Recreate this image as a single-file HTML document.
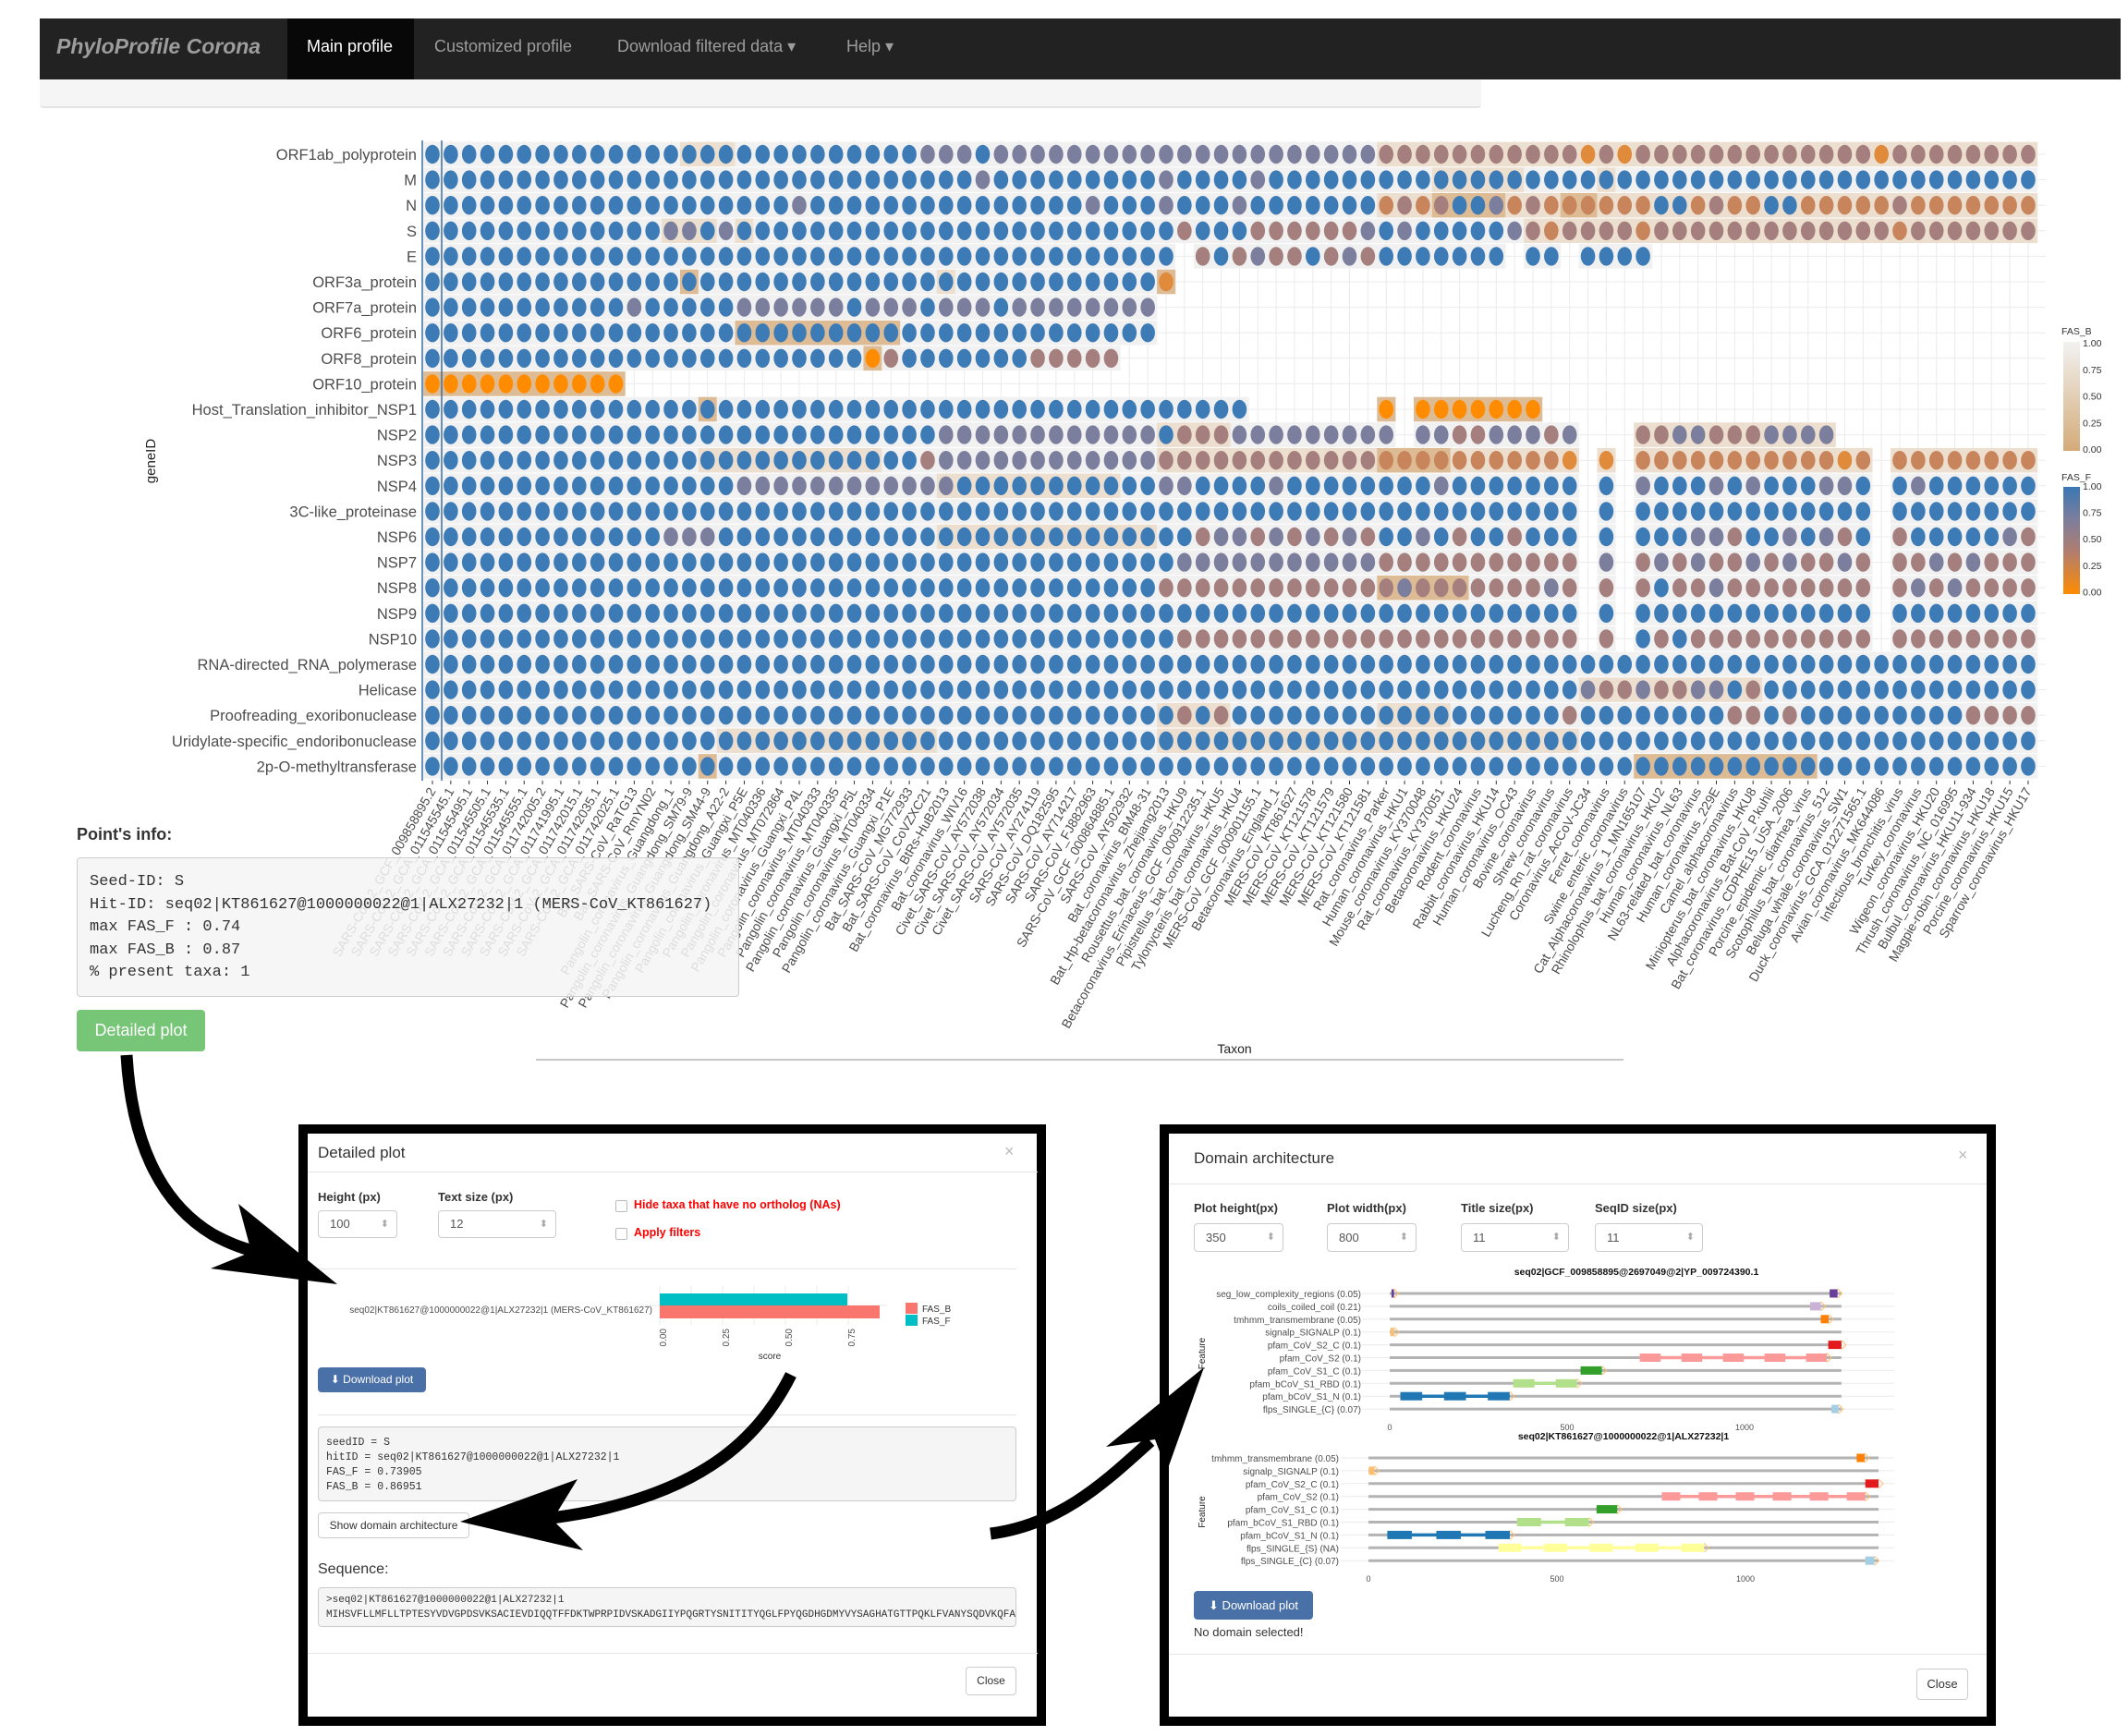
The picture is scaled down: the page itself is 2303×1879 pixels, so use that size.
<!DOCTYPE html>
<html><head><meta charset="utf-8">
<style>
html,body{margin:0;padding:0;}
body{width:2303px;height:1879px;position:relative;overflow:hidden;background:#fff;font-family:"Liberation Sans",sans-serif;color:#333;}
.a{position:absolute;}
.nav{left:43px;top:20px;width:2252px;height:66px;background:#222;}
.nav span{position:absolute;top:20px;font-size:18px;color:#9d9d9d;}
.mono{font-family:"Liberation Mono",monospace;}
.frame{position:absolute;border:10px solid #000;background:#fff;box-sizing:border-box;}
.inp{position:absolute;border:1px solid #ccc;border-radius:4px;background:#fff;box-sizing:border-box;font-size:13px;color:#555;padding-left:12px;}
.inp:after{content:"⬍";position:absolute;right:8px;font-size:11px;color:#aaa;}
.lbl{position:absolute;font-size:13px;font-weight:bold;color:#333;}
.hr{position:absolute;height:1px;background:#e5e5e5;}
.btn{position:absolute;border-radius:4px;box-sizing:border-box;font-size:13px;text-align:center;}
.pre{position:absolute;background:#f5f5f5;border:1px solid #ccc;border-radius:4px;box-sizing:border-box;overflow:hidden;font-family:"Liberation Mono",monospace;color:#333;white-space:pre;}
</style></head><body>

<div class="a nav">
  <span style="left:18px;top:17px;font-size:23px;font-weight:bold;font-style:italic;color:#9d9d9d;">PhyloProfile Corona</span>
  <div class="a" style="left:268px;top:0;width:137px;height:66px;background:#080808;"></div>
  <span style="left:289px;color:#fff;">Main profile</span>
  <span style="left:427px;">Customized profile</span>
  <span style="left:625px;">Download filtered data ▾</span>
  <span style="left:873px;">Help ▾</span>
</div>
<div class="a" style="left:43px;top:86px;width:1560px;height:29px;background:#f5f5f5;border-bottom:2px solid #e3e3e3;border-radius:0 0 4px 4px;"></div>

<svg id="hm" class="a" style="left:0;top:0" width="2303" height="1160"></svg>

<div class="a" style="left:83px;top:893px;font-size:18px;font-weight:bold;color:#333;">Point's info:</div>
<div class="a mono" style="left:83px;top:928px;width:717px;height:151px;background:rgba(245,245,245,0.86);border:1px solid #ccc;border-radius:4px;box-sizing:border-box;"></div>
<div class="a mono" style="left:97px;top:943px;font-size:17px;line-height:24.5px;color:#333;white-space:pre;">Seed-ID: S
Hit-ID: seq02|KT861627@1000000022@1|ALX27232|1 (MERS-CoV_KT861627)
max FAS_F : 0.74
max FAS_B : 0.87
% present taxa: 1</div>
<div class="a" style="left:83px;top:1093px;width:139px;height:45px;background:#77c577;border-radius:4px;color:#fff;font-size:18px;line-height:45px;text-align:center;">Detailed plot</div>
<div class="a" style="left:580px;top:1146px;width:1177px;height:2px;background:#c8c8c8;"></div>

<!-- Left modal -->
<div class="frame" style="left:323px;top:1217px;width:809px;height:651px;"></div>
<div class="a" style="left:344px;top:1238px;font-size:17px;color:#333;">Detailed plot</div>
<div class="a" style="left:1087px;top:1236px;font-size:18px;color:#bbb;">×</div>
<div class="hr" style="left:333px;top:1268px;width:790px;"></div>
<div class="lbl" style="left:344px;top:1288px;">Height (px)</div>
<div class="inp" style="left:344px;top:1310px;width:86px;height:30px;line-height:28px;">100</div>
<div class="lbl" style="left:474px;top:1288px;">Text size (px)</div>
<div class="inp" style="left:474px;top:1310px;width:128px;height:30px;line-height:28px;">12</div>
<div class="a" style="left:666px;top:1299px;width:11px;height:11px;border:1px solid #bbb;border-radius:2px;"></div>
<div class="a" style="left:686px;top:1297px;font-size:12.5px;font-weight:bold;color:#f00;">Hide taxa that have no ortholog (NAs)</div>
<div class="a" style="left:666px;top:1329px;width:11px;height:11px;border:1px solid #bbb;border-radius:2px;"></div>
<div class="a" style="left:686px;top:1327px;font-size:12.5px;font-weight:bold;color:#f00;">Apply filters</div>
<div class="hr" style="left:344px;top:1373px;width:756px;"></div>
<svg class="a" style="left:340px;top:1390px" width="720" height="90">
  <g stroke="#ebebeb"><line x1="374" y1="2" x2="374" y2="44"/><line x1="408" y1="2" x2="408" y2="44"/><line x1="442" y1="2" x2="442" y2="44"/><line x1="476" y1="2" x2="476" y2="44"/><line x1="510" y1="2" x2="510" y2="44"/><line x1="544" y1="2" x2="544" y2="44"/><line x1="578" y1="2" x2="578" y2="44"/><line x1="350" y1="23" x2="620" y2="23"/></g>
  <rect x="374" y="10" width="203" height="13" fill="#00bfc4"/>
  <rect x="374" y="23" width="238" height="14" fill="#f8766d"/>
  <text x="366" y="31" font-size="10" fill="#4d4d4d" text-anchor="end" font-family="Liberation Sans">seq02|KT861627@1000000022@1|ALX27232|1 (MERS-CoV_KT861627)</text>
  <g font-size="10" fill="#4d4d4d" font-family="Liberation Sans" text-anchor="end">
   <text transform="translate(381,48) rotate(-90)">0.00</text>
   <text transform="translate(449,48) rotate(-90)">0.25</text>
   <text transform="translate(517,48) rotate(-90)">0.50</text>
   <text transform="translate(585,48) rotate(-90)">0.75</text>
  </g>
  <text x="493" y="81" font-size="10" fill="#333" text-anchor="middle" font-family="Liberation Sans">score</text>
  <rect x="640" y="20" width="13" height="12" fill="#f8766d"/><rect x="640" y="33" width="13" height="12" fill="#00bfc4"/>
  <text x="658" y="30" font-size="10" fill="#333" font-family="Liberation Sans">FAS_B</text>
  <text x="658" y="43" font-size="10" fill="#333" font-family="Liberation Sans">FAS_F</text>
</svg>
<div class="btn" style="left:344px;top:1480px;width:117px;height:27px;background:#4a70a8;color:#fff;line-height:27px;font-size:12px;">⬇ Download plot</div>
<div class="hr" style="left:344px;top:1531px;width:756px;"></div>
<div class="pre" style="left:344px;top:1544px;width:756px;height:81px;font-size:11.5px;line-height:16px;padding:9px 0 0 8px;">seedID = S
hitID = seq02|KT861627@1000000022@1|ALX27232|1
FAS_F = 0.73905
FAS_B = 0.86951</div>
<div class="btn" style="left:344px;top:1637px;width:164px;height:28px;border:1px solid #ccc;background:#fff;color:#333;line-height:26px;font-size:12px;">Show domain architecture</div>
<div class="a" style="left:344px;top:1690px;font-size:16px;color:#333;">Sequence:</div>
<div class="pre" style="left:344px;top:1718px;width:756px;height:43px;font-size:11px;line-height:16px;padding:5px 0 0 8px;">&gt;seq02|KT861627@1000000022@1|ALX27232|1
MIHSVFLLMFLLTPTESYVDVGPDSVKSACIEVDIQQTFFDKTWPRPIDVSKADGIIYPQGRTYSNITITYQGLFPYQGDHGDMYVYSAGHATGTTPQKLFVANYSQDVKQFANGFVVRIGAAANSTGTVIISPSTSATIRKIYPAFMLGSSVGNFSDGKMGRFFNHTLVLLPDGCGTLLRAFYCILEPRSGNHCPAGNSYTSFATYHTPATDCSDGNYNRNASLNSFKEYFNLRNCTFMYTYNITEDEILEWFGITQTAQGVHLFSSRYVDLYGGNMFQFATLPVYDTIKYYSIIPHSIRSIQSDRKAWAAFYVYKLQPLTFLLDFSVDGYIRRAIDCGFNDLSQLHCSYESFDVESGVYSVSSFEAKPSGSVVEQAEGVECDFSPLLSGTPPQVYNFKRLVFTNCNYNLTKLLSLFSVNDFTCSQISPAAIASNCYSSLILDYFSYPLSMKSDLSVSSAGPISQFNYKQSFSNPTCLILATVPHNLTTITKPLKYSYINKCSRLLSDDRTEVPQLVNANQYSPCVSIVPSTVWEDGDYYRKQLSPLEGGGWLVASGSTVAMTEQLQMGFGITVQYGTDTNSVCPKLEFANDTKIASQLGNCVEYSLYGVSGRGVFQNCTAVGVRQQRFVYDAYQNLVGYYSDDGNYYCLRACVSVPVSVIYDKETKTHATLFGSVACEHISSTMSQYSRSTRSMLKRRDSTYGPLQTPVGCVLGLVNSSLFVEDCKLPLGQSLCALPDTPSTLTPRSVRSVPGEMRLASIAFNHPIQVDQLNSSYFKLSIPTNFSFGVTQEYIQTTIQKVTVDCKQYVCNGFQKCEQLLREYGQFCSKINQALHGANLRQDDSVRNLFASVKSSQSSPIIPGFGGDFNLTLLEPVSISTGSRSARSAIEDLLFDKVTIADPGYMQGYDDCMQQGPASARDLICAQYVAGYKVLPPLMDVNMEAAYTSSLLGSIAGVGWTAGLSSFAAIPFAQSIFYRLNGVGITQQVLSENQKLIANKFNQALGAMQTGFTTTNEAFHKVQDAVNNNAQALSKLASELSNTFGAISASIGDIIQRLDVLEQDAQIDRLINGRLTTLNAFVAQQLVRSESAALSAQLAKDKVNECVKAQSKRSGFCGQGTHIVSFVVNAPNGLYFMHVGYYPSNHIEVVSAYGLCDAANPTNCIAPVNGYFIKTNNTRIVDEWSYTGSSFYAPEPITSLNTKYVAPQVTYQNISTNLPPPLLGNSTGIDFQDELDEFFKNVSTSIPNFGSLTQINTTLLDLTYEMLSLQQVVKALNESYIDLKELGNYTYYNKWPWYIWLGFIAGLVALALCVFFILCCTGCGTNCMGKLKCNRCCDRYEEYDLEPHKVHVH</div>
<div class="hr" style="left:333px;top:1789px;width:790px;"></div>
<div class="btn" style="left:1045px;top:1804px;width:55px;height:31px;border:1px solid #ccc;background:#fff;color:#333;line-height:29px;font-size:12px;">Close</div>

<!-- Right modal -->
<div class="frame" style="left:1255px;top:1217px;width:905px;height:651px;"></div>
<div class="a" style="left:1292px;top:1244px;font-size:17px;color:#333;">Domain architecture</div>
<div class="a" style="left:2119px;top:1240px;font-size:18px;color:#bbb;">×</div>
<div class="hr" style="left:1265px;top:1281px;width:885px;"></div>
<div class="lbl" style="left:1292px;top:1300px;">Plot height(px)</div>
<div class="lbl" style="left:1436px;top:1300px;">Plot width(px)</div>
<div class="lbl" style="left:1581px;top:1300px;">Title size(px)</div>
<div class="lbl" style="left:1726px;top:1300px;">SeqID size(px)</div>
<div class="inp" style="left:1292px;top:1324px;width:97px;height:31px;line-height:29px;">350</div>
<div class="inp" style="left:1436px;top:1324px;width:97px;height:31px;line-height:29px;">800</div>
<div class="inp" style="left:1581px;top:1324px;width:117px;height:31px;line-height:29px;">11</div>
<div class="inp" style="left:1726px;top:1324px;width:117px;height:31px;line-height:29px;">11</div>
<svg id="dom" class="a" style="left:1265px;top:1360px" width="885" height="360"></svg>
<div class="btn" style="left:1292px;top:1722px;width:129px;height:31px;background:#4a70a8;color:#fff;line-height:31px;font-size:13px;">⬇ Download plot</div>
<div class="a" style="left:1292px;top:1759px;font-size:13px;color:#333;">No domain selected!</div>
<div class="hr" style="left:1265px;top:1790px;width:885px;"></div>
<div class="btn" style="left:2074px;top:1806px;width:56px;height:34px;border:1px solid #ccc;background:#fff;color:#333;line-height:32px;font-size:13px;">Close</div>

<!-- arrows -->
<svg class="a" style="left:0;top:0" width="2303" height="1879">
  <g fill="none" stroke="#000" stroke-width="13">
    <path d="M137,1142 C142,1230 170,1300 230,1336 C250,1347 265,1352 285,1357"/>
    <path d="M856,1488 C820,1560 760,1610 640,1636 C620,1640 605,1642 590,1644"/>
    <path d="M1072,1660 C1150,1650 1200,1600 1245,1560"/>
  </g>
  <polygon points="258,1303 365,1390 228,1373 272,1355" fill="#000"/>
  <polygon points="625,1601 498,1647 631,1678 598,1645" fill="#000"/>
  <polygon points="1197,1566 1303,1480 1263,1592 1250,1558" fill="#000"/>
</svg>

<script>
(function(){
var NS="http://www.w3.org/2000/svg";
function el(p,n,a,t){var e=document.createElementNS(NS,n);for(var k in a)e.setAttribute(k,a[k]);if(t!=null)e.textContent=t;p.appendChild(e);return e;}
var svg=document.getElementById("hm");
var N=88,x0=468,dx=19.85,y0=167,dy=27.6;
var genes=["ORF1ab_polyprotein","M","N","S","E","ORF3a_protein","ORF7a_protein","ORF6_protein","ORF8_protein","ORF10_protein","Host_Translation_inhibitor_NSP1","NSP2","NSP3","NSP4","3C-like_proteinase","NSP6","NSP7","NSP8","NSP9","NSP10","RNA-directed_RNA_polymerase","Helicase","Proofreading_exoribonuclease","Uridylate-specific_endoribonuclease","2p-O-methyltransferase"];
var taxa=["SARS-CoV-2_GCF_009858895.2","SARS-CoV-2_GCA_011545545.1","SARS-CoV-2_GCA_011545495.1","SARS-CoV-2_GCA_011545505.1","SARS-CoV-2_GCA_011545535.1","SARS-CoV-2_GCA_011545555.1","SARS-CoV-2_GCA_011742005.2","SARS-CoV-2_GCA_011741995.1","SARS-CoV-2_GCA_011742015.1","SARS-CoV-2_GCA_011742035.1","SARS-CoV-2_GCA_011742025.1","Bat_SARS-CoV_RaTG13","Bat_SARS-CoV_RmYN02","Pangolin_coronavirus_Guangdong_1","Pangolin_coronavirus_Guangdong_SM79-9","Pangolin_coronavirus_Guangdong_SM44-9","Pangolin_coronavirus_Guangdong_A22-2","Pangolin_coronavirus_Guangxi_P5E","Pangolin_coronavirus_MT040336","Pangolin_coronavirus_MT072864","Pangolin_coronavirus_Guangxi_P4L","Pangolin_coronavirus_MT040333","Pangolin_coronavirus_MT040335","Pangolin_coronavirus_Guangxi_P5L","Pangolin_coronavirus_MT040334","Pangolin_coronavirus_Guangxi_P1E","Bat_SARS-CoV_MG772933","Bat_SARS-CoV_CoVZXC21","Bat_coronavirus_BtRs-HuB2013","Bat_coronavirus_WIV16","Civet_SARS-CoV_AY572038","Civet_SARS-CoV_AY572034","Civet_SARS-CoV_AY572035","SARS-CoV_AY274119","SARS-CoV_DQ182595","SARS-CoV_AY714217","SARS-CoV_FJ882963","SARS-CoV_GCF_000864885.1","SARS-CoV_AY502932","Bat_coronavirus_BM48-31","Bat_Hp-betacoronavirus_Zhejiang2013","Rousettus_bat_coronavirus_HKU9","Betacoronavirus_Erinaceus_GCF_000912235.1","Pipistrellus_bat_coronavirus_HKU5","Tylonycteris_bat_coronavirus_HKU4","MERS-CoV_GCF_000901155.1","Betacoronavirus_England_1","MERS-CoV_KT861627","MERS-CoV_KT121578","MERS-CoV_KT121579","MERS-CoV_KT121580","MERS-CoV_KT121581","Rat_coronavirus_Parker","Human_coronavirus_HKU1","Mouse_coronavirus_KY370048","Rat_coronavirus_KY370051","Betacoronavirus_HKU24","Rodent_coronavirus","Rabbit_coronavirus_HKU14","Human_coronavirus_OC43","Bovine_coronavirus","Shrew_coronavirus","Lucheng_Rn_rat_coronavirus","Coronavirus_AcCoV-JC34","Ferret_coronavirus","Swine_enteric_coronavirus","Cat_Alphacoronavirus_1_MN165107","Rhinolophus_bat_coronavirus_HKU2","Human_coronavirus_NL63","NL63-related_bat_coronavirus","Human_coronavirus_229E","Camel_alphacoronavirus","Miniopterus_bat_coronavirus_HKU8","Alphacoronavirus_Bat-CoV_P.kuhlii","Bat_coronavirus_CDPHE15_USA_2006","Porcine_epidemic_diarrhea_virus","Scotophilus_bat_coronavirus_512","Beluga_whale_coronavirus_SW1","Duck_coronavirus_GCA_012271565.1","Avian_coronavirus_MK644086","Infectious_bronchitis_virus","Turkey_coronavirus","Wigeon_coronavirus_HKU20","Thrush_coronavirus_NC_016995","Bulbul_coronavirus_HKU11-934","Magpie-robin_coronavirus_HKU18","Porcine_coronavirus_HKU15","Sparrow_coronavirus_HKU17"];
var C={b:"#3d7bb6",p:"#7b7e9d",r:"#a57f7d",o:"#c8845b",O:"#ff8c00",q:"#e08a3c"};
var BG={g:"#f1f1f1",l:"#eddfcf",t:"#dcbb95"};
function mk(specs){var a=[];for(var i=0;i<N;i++)a.push(".");specs.forEach(function(s){for(var i=s[0];i<=s[1];i++)a[i]=s[2].length>1?s[2][(i-s[0])%s[2].length]:s[2];});return a;}
var gap=[[63,63,"."],[65,65,"."],[79,79,"."]];
function G(specs){return mk(specs.concat(gap));}
var rows=[
 mk([[0,26,"b"],[27,51,"p"],[30,30,"b"],[52,87,"r"],[63,63,"q"],[65,65,"q"],[79,79,"q"]]),
 mk([[0,87,"b"],[30,30,"p"],[40,40,"p"],[45,45,"p"]]),
 mk([[0,51,"b"],[20,20,"p"],[36,36,"p"],[40,40,"p"],[44,44,"p"],[52,87,"o"],[53,53,"r"],[55,55,"r"],[60,60,"r"],[70,70,"r"],[80,80,"r"],[56,57,"b"],[58,58,"p"],[67,68,"b"],[73,74,"b"]]),
 mk([[0,38,"b"],[13,14,"p"],[16,16,"p"],[39,50,"bbrbbbrrrrrr"],[51,51,"p"],[52,59,"bpbbbbbp"],[60,87,"r"],[61,61,"o"],[66,66,"o"],[80,80,"o"]]),
 mk([[0,40,"b"],[42,51,"rbrpr"],[52,58,"b"],[60,61,"b"],[63,66,"b"]]),
 mk([[0,39,"b"],[40,40,"q"]]),
 mk([[0,10,"b"],[11,11,"p"],[12,16,"b"],[17,39,"p"],[23,23,"b"],[27,27,"b"],[31,31,"b"]]),
 mk([[0,39,"b"]]),
 mk([[0,23,"b"],[24,24,"O"],[25,25,"r"],[26,32,"b"],[33,37,"r"]]),
 mk([[0,10,"O"]]),
 mk([[0,44,"b"],[52,52,"O"],[54,60,"O"]]),
 mk([[0,27,"b"],[28,39,"p"],[40,40,"b"],[41,43,"r"],[44,52,"p"],[54,62,"pprrppprp"],[66,76,"rrpprrrpppp"]]),
 G([[0,26,"b"],[27,27,"r"],[28,39,"p"],[40,51,"r"],[52,62,"o"],[62,62,"q"],[64,64,"q"],[66,78,"o"],[77,77,"q"],[80,87,"o"]]),
 G([[0,16,"b"],[17,27,"p"],[28,39,"b"],[28,28,"p"],[40,41,"p"],[42,62,"b"],[46,46,"p"],[55,55,"p"],[64,64,"b"],[66,78,"pbbbpbpbbbppb"],[80,87,"bpbbbbbb"]]),
 G([[0,87,"b"]]),
 G([[0,39,"b"],[13,15,"p"],[40,51,"bbrpprprprpr"],[52,62,"bbpbrbbrbbb"],[64,64,"b"],[66,78,"bbbpprbbpbprb"],[80,87,"rbbbbbpr"]]),
 G([[0,40,"b"],[41,51,"p"],[52,62,"r"],[64,64,"p"],[66,78,"rprprrprprrpr"],[80,87,"rrprprrr"]]),
 G([[0,39,"b"],[40,62,"r"],[53,53,"p"],[61,61,"p"],[64,64,"r"],[66,78,"r"],[67,67,"b"],[70,70,"p"],[80,87,"r"],[81,81,"p"],[83,83,"p"]]),
 G([[0,87,"b"]]),
 G([[0,40,"b"],[41,62,"r"],[64,64,"r"],[66,66,"b"],[67,67,"r"],[68,68,"b"],[69,78,"r"],[80,87,"r"]]),
 mk([[0,87,"b"]]),
 mk([[0,87,"b"],[63,72,"prrprrppbr"]]),
 mk([[0,87,"b"],[41,41,"r"],[43,43,"r"],[62,62,"r"],[71,72,"r"],[74,74,"r"],[84,87,"r"]]),
 mk([[0,87,"b"]]),
 mk([[0,87,"b"]])
];
var bgs={0:[[52,87,"l"],[14,16,"l"]],1:[[55,59,"l"],[64,64,"l"]],2:[[52,87,"l"],[55,58,"t"],[62,63,"t"]],3:[[13,15,"l"],[17,17,"l"],[60,87,"l"]],5:[[14,14,"t"],[40,40,"t"],[28,28,"l"]],7:[[17,25,"t"]],8:[[24,24,"t"]],9:[[0,10,"t"]],10:[[15,15,"t"],[52,52,"t"],[54,60,"t"]],11:[[40,43,"l"],[66,76,"l"]],12:[[15,24,"l"],[40,62,"l"],[52,55,"t"],[64,64,"l"],[66,78,"l"],[80,87,"l"]],13:[[28,37,"l"]],15:[[28,39,"l"]],17:[[52,53,"t"],[54,56,"t"]],21:[[63,72,"l"]],22:[[40,43,"l"],[52,55,"l"]],23:[[16,27,"l"],[40,62,"l"]],24:[[15,15,"t"],[66,75,"t"]]};
// panel
el(svg,"rect",{x:457,y:152,width:1757,height:693,fill:"#fff"});
var gl=el(svg,"g",{stroke:"#ebebeb","stroke-width":1});
for(var i=0;i<N;i++){var x=x0+i*dx;el(gl,"line",{x1:x,y1:152,x2:x,y2:845});}
for(var j=0;j<25;j++){var y=y0+j*dy;el(gl,"line",{x1:457,y1:y,x2:2214,y2:y});}
for(var j=0;j<25;j++){
 var y=y0+j*dy,r=rows[j];
 var bgr=r.map(function(c){return c=="."?".":"g";});
 (bgs[j]||[]).forEach(function(s){for(var i=s[0];i<=s[1];i++)if(bgr[i]!=".")bgr[i]=s[2];});
 for(var i=0;i<N;i++){if(r[i]==".")continue;var x=x0+i*dx;
  el(svg,"rect",{x:x-dx/2,y:y-dy/2+0.5,width:dx+0.3,height:dy-1,fill:BG[bgr[i]]});}
 for(var i=0;i<N;i++){if(r[i]==".")continue;var x=x0+i*dx;
  el(svg,"ellipse",{cx:x,cy:y,rx:7.8,ry:10.2,fill:C[r[i]]});}
 el(svg,"text",{x:451,y:y+6,"text-anchor":"end","font-size":16.5,fill:"#4d4d4d","font-family":"Liberation Sans"},genes[j]);
}
el(svg,"line",{x1:457,y1:152,x2:457,y2:845,stroke:"#3b6ea8","stroke-width":1.5});
el(svg,"line",{x1:478,y1:152,x2:478,y2:845,stroke:"#3b6ea8","stroke-width":1.5});
for(var i=0;i<N;i++){var x=x0+i*dx;el(svg,"line",{x1:x,y1:845,x2:x,y2:849,stroke:"#333","stroke-width":1});
 el(svg,"text",{transform:"translate("+(x+4)+",856) rotate(-60)","text-anchor":"end","font-size":14,fill:"#4d4d4d","font-family":"Liberation Sans"},taxa[i]);}
el(svg,"text",{transform:"translate(168,499) rotate(-90)","text-anchor":"middle","font-size":15,fill:"#222","font-family":"Liberation Sans"},"geneID");
el(svg,"text",{x:1336,y:1140,"text-anchor":"middle","font-size":14,fill:"#222","font-family":"Liberation Sans"},"Taxon");
// legends
var d=el(svg,"defs",{});
var g1=el(d,"linearGradient",{id:"gb",x1:0,y1:0,x2:0,y2:1});el(g1,"stop",{offset:0,"stop-color":"#f2f2f2"});el(g1,"stop",{offset:1,"stop-color":"#d4ab78"});
var g2=el(d,"linearGradient",{id:"gf",x1:0,y1:0,x2:0,y2:1});el(g2,"stop",{offset:0,"stop-color":"#3a77b5"});el(g2,"stop",{offset:0.3,"stop-color":"#7c7e9c"});el(g2,"stop",{offset:0.6,"stop-color":"#b07d70"});el(g2,"stop",{offset:1,"stop-color":"#ff8c00"});
var LF={"font-size":10.5,fill:"#333","font-family":"Liberation Sans"};
function T(x,y,s){var a={x:x,y:y};for(var k in LF)a[k]=LF[k];el(svg,"text",a,s);}
T(2231,362,"FAS_B");el(svg,"rect",{x:2233,y:370,width:18,height:118,fill:"url(#gb)"});
T(2231,520,"FAS_F");el(svg,"rect",{x:2233,y:527,width:18,height:116,fill:"url(#gf)"});
["1.00","0.75","0.50","0.25","0.00"].forEach(function(s,k){T(2254,375+k*28.8,s);T(2254,530+k*28.6,s);});

// domain plots
var ds=document.getElementById("dom");
function dplot(oy,title,tx,labR,lx0,scale,len,feats){
 el(ds,"text",{x:tx,y:oy,"text-anchor":"middle","font-size":10.5,"font-weight":"bold",fill:"#111","font-family":"Liberation Sans"},title);
 var fy=oy+20;
 feats.forEach(function(f,k){var y=fy+k*13.9;
  el(ds,"line",{x1:lx0-30,y1:y,x2:785,y2:y,stroke:"#ebebeb","stroke-width":1});
  el(ds,"line",{x1:lx0,y1:y,x2:lx0+len*scale,y2:y,stroke:"#b3b3b3","stroke-width":3});
  el(ds,"text",{x:labR,y:y+4,"text-anchor":"end","font-size":10,fill:"#4d4d4d","font-family":"Liberation Sans"},f[0]);
  (f[1]||[]).forEach(function(s){var a=lx0+s[0]*scale,b=lx0+s[1]*scale;
   el(ds,"line",{x1:a,y1:y,x2:b,y2:y,stroke:s[2],"stroke-width":3.5});
   var n=s[3]||1;if(n==1){el(ds,"rect",{x:a,y:y-4.5,width:b-a,height:9,fill:s[2]});}
   else{var w=(b-a)/(2*n-1);for(var q=0;q<n;q++)el(ds,"rect",{x:a+2*q*w,y:y-4.5,width:w,height:9,fill:s[2]});}
   el(ds,"path",{d:"M"+b+","+(y-5)+" l5,5 l-5,5",fill:"none",stroke:"#fdbf6f","stroke-width":1});
  });
 });
 var ay=fy+feats.length*13.9+9;
 [0,500,1000].forEach(function(v){el(ds,"text",{x:lx0+v*scale,y:ay,"text-anchor":"middle","font-size":9,fill:"#4d4d4d","font-family":"Liberation Sans"},v);});
 el(ds,"text",{transform:"translate(39,"+(fy+feats.length*6.5)+") rotate(-90)","text-anchor":"middle","font-size":10,fill:"#222","font-family":"Liberation Sans"},"Feature");
}
dplot(20,"seq02|GCF_009858895@2697049@2|YP_009724390.1",506,208,239,0.384,1273,[
 ["seg_low_complexity_regions (0.05)",[[5,12,"#6a3d9a"],[1240,1262,"#6a3d9a"]]],
 ["coils_coiled_coil (0.21)",[[1185,1215,"#cab2d6"]]],
 ["tmhmm_transmembrane (0.05)",[[1215,1237,"#ff7f00"]]],
 ["signalp_SIGNALP (0.1)",[[2,13,"#fdbf6f"]]],
 ["pfam_CoV_S2_C (0.1)",[[1236,1273,"#e31a1c"]]],
 ["pfam_CoV_S2 (0.1)",[[705,1232,"#fb9a99",5]]],
 ["pfam_CoV_S1_C (0.1)",[[538,598,"#33a02c"]]],
 ["pfam_bCoV_S1_RBD (0.1)",[[348,528,"#b2df8a",2]]],
 ["pfam_bCoV_S1_N (0.1)",[[30,338,"#1f78b4",3]]],
 ["flps_SINGLE_{C} (0.07)",[[1245,1265,"#a6cee3"]]]
]);
dplot(198,"seq02|KT861627@1000000022@1|ALX27232|1",492,184,216,0.408,1353,[
 ["tmhmm_transmembrane (0.05)",[[1295,1316,"#ff7f00"]]],
 ["signalp_SIGNALP (0.1)",[[1,16,"#fdbf6f"]]],
 ["pfam_CoV_S2_C (0.1)",[[1318,1353,"#e31a1c"]]],
 ["pfam_CoV_S2 (0.1)",[[778,1318,"#fb9a99",6]]],
 ["pfam_CoV_S1_C (0.1)",[[605,660,"#33a02c"]]],
 ["pfam_bCoV_S1_RBD (0.1)",[[394,585,"#b2df8a",2]]],
 ["pfam_bCoV_S1_N (0.1)",[[50,375,"#1f78b4",3]]],
 ["flps_SINGLE_{S} (NA)",[[345,890,"#ffff99",5]]],
 ["flps_SINGLE_{C} (0.07)",[[1318,1342,"#a6cee3"]]]
]);
})();
</script>
</body></html>
